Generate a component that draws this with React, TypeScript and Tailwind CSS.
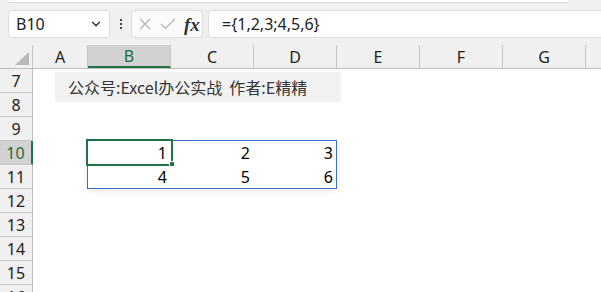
import { ChevronDown } from "lucide-react";

const cols = [
  { name: "A", w: "w-[55px]" },
  { name: "B", w: "w-[83px]" },
  { name: "C", w: "w-[83px]" },
  { name: "D", w: "w-[83px]" },
  { name: "E", w: "w-[83px]" },
  { name: "F", w: "w-[83px]" },
  { name: "G", w: "w-[83px]" },
  { name: "H", w: "w-[83px]" },
];

const rows = [7, 8, 9, 10, 11, 12, 13, 14, 15, 16];

const values: Record<number, string[]> = {
  10: ["", "1", "2", "3"],
  11: ["", "4", "5", "6"],
};

const uiFont = { fontFamily: '"Noto Sans", "Noto Sans CJK SC", sans-serif' };

export default function App() {
  return (
    <div
      className="relative w-[601px] h-[292px] overflow-hidden bg-white text-[#222]"
      style={uiFont}
    >
      {/* toolbar / formula bar */}
      <div className="bg-[#f0f0f0] h-[45px]">
        <div className="ml-[8px] h-[3px] w-[560px] bg-white border-b border-[#d6d6d6] rounded-bl-[4px]" />
        <div className="flex items-center pl-[8px] pt-[7px]">
          <div className="shrink-0 flex items-center justify-between w-[102px] h-[28px] bg-white border border-[#dcdcdc] rounded-[4px] pl-[7px] pr-[6px]">
            <span className="text-[16px] leading-none">B10</span>
            <ChevronDown size={14} strokeWidth={2.5} className="text-[#333]" />
          </div>
          <div className="shrink-0 flex flex-col gap-[2px] w-[21px] items-center">
            <span className="w-[2px] h-[2px] bg-[#444]" />
            <span className="w-[2px] h-[2px] bg-[#444]" />
            <span className="w-[2px] h-[2px] bg-[#444]" />
          </div>
          <div className="shrink-0 flex items-center w-[72px] h-[28px] bg-[#fbfbfb] border border-[#dcdcdc] rounded-[4px] pl-[6px]">
            <svg width="12" height="12" viewBox="0 0 12 12" className="ml-[1px]">
              <path d="M1 1 L11 11 M11 1 L1 11" stroke="#b4b4b4" strokeWidth="1.2" fill="none" />
            </svg>
            <svg width="16" height="12" viewBox="0 0 16 12" className="ml-[9px]">
              <path d="M1 6 L5.5 10.5 L15 1" stroke="#b4b4b4" strokeWidth="1.2" fill="none" />
            </svg>
            <span
              className="ml-[8px] text-[19px] italic font-bold leading-none text-[#333]"
              style={{ fontFamily: '"Liberation Serif", serif' }}
            >
              fx
            </span>
          </div>
          <div className="shrink-0 ml-[5px] flex items-center w-[420px] h-[28px] bg-white border border-[#dcdcdc] rounded-[4px] pl-[13px]">
            <span className="text-[16px] leading-none">={"{"}1,2,3;4,5,6{"}"}</span>
          </div>
        </div>
      </div>

      {/* column headers */}
      <div className="flex h-[24px] bg-[#f0f0f0] border-b border-[#bdbdbd]">
        <div className="w-[33px] shrink-0 flex items-end justify-end pr-[3px] pb-[3px] border-r border-[#c6c6c6]">
          <svg width="14" height="13" viewBox="0 0 14 13">
            <path d="M14 0 L14 13 L0 13 Z" fill="#b8b8b8" />
          </svg>
        </div>
        {cols.map((c) => (
          <div
            key={c.name}
            className={`${c.w} shrink-0 flex items-center justify-center text-[16px] border-r border-[#c6c6c6] ${
              c.name === "B"
                ? "bg-[#d2d2d2] text-[#1e6b3f] border-b-2 border-b-[#217346]"
                : ""
            }`}
          >
            {c.name}
          </div>
        ))}
      </div>

      {/* rows */}
      {rows.map((r) => (
        <div key={r} className="flex h-[24px]">
          <div
            className={`w-[33px] shrink-0 flex items-center justify-center text-[16px] border-b border-[#c6c6c6] ${
              r === 10
                ? "bg-[#d2d2d2] text-[#1e6b3f] border-r-2 border-r-[#217346]"
                : "bg-[#f0f0f0] border-r border-r-[#bdbdbd]"
            }`}
          >
            {r}
          </div>
          {cols.map((c, i) => (
            <div
              key={c.name}
              className={`${c.w} shrink-0 flex items-center justify-end pr-[4px] text-[16px] text-black`}
            >
              {values[r]?.[i] ?? ""}
            </div>
          ))}
        </div>
      ))}

      {/* text box shape */}
      <div
        className="absolute left-[55px] top-[72px] w-[286px] h-[30px] bg-[#f2f2f2] flex items-center pl-[13px] text-[16px] text-[#333]"
        style={{ fontFamily: '"Noto Sans CJK SC", sans-serif' }}
      >
        公众号:Excel办公实战&nbsp;&nbsp;作者:E精精
      </div>

      {/* selected range */}
      <div className="absolute left-[87px] top-[140px] w-[250px] h-[49px] border border-[#3b6fcf] shadow-[0_3px_6px_rgba(0,0,0,0.08)]" />
      <div className="absolute left-[86px] top-[139px] w-[87px] h-[27px] border-2 border-[#217346]" />
      <div className="absolute left-[169px] top-[161px] w-[6px] h-[6px] bg-[#217346] border border-white" />
    </div>
  );
}
